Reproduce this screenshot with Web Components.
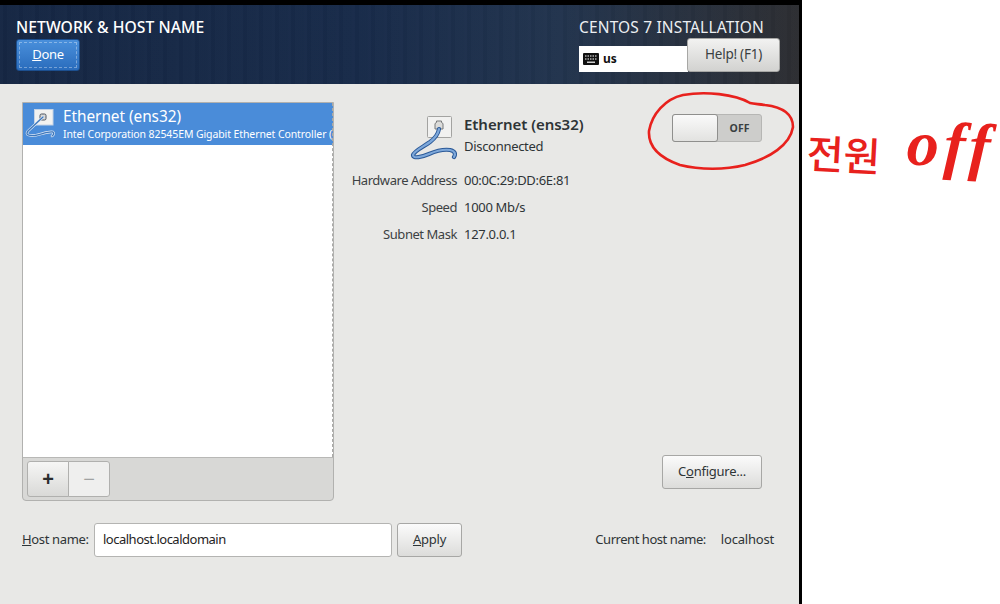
<!DOCTYPE html>
<html lang="en">
<head>
<meta charset="utf-8">
<title>Network & Host Name</title>
<style>
  html, body { margin: 0; padding: 0; background: #fff; }
  body { font-family: "Noto Sans", sans-serif; }
</style>
</head>
<body>
<install-window>
  <spoke-header slot="header" title-text="NETWORK &amp; HOST NAME" product="CENTOS 7 INSTALLATION"></spoke-header>
  <network-spoke slot="body"></network-spoke>
</install-window>

<script>
const FONT = '"Noto Sans", sans-serif';

class GtkButton extends HTMLElement {
  constructor() {
    super();
    this.shadowDOM = this.attachShadow({ mode: 'open' });
  }

  connectedCallback() {
    this.shadowDOM.innerHTML = `
    <style>
      :host {
        display: flex;
        align-items: center;
        justify-content: center;
        box-sizing: border-box;
        width: var(--w, 64px);
        height: var(--h, 34px);
        flex: none;
        padding-bottom: 2px;
        border: 1px solid #a7a7a5;
        border-radius: 3px;
        background: linear-gradient(#fbfbfb, #dcdcda);
        color: #2e3436;
        font: 13px/1 ${FONT};
        letter-spacing: -0.25px;
      }
      :host([kind="done"]) {
        background: linear-gradient(#4a90dc, #2a6cbc);
        border-color: #1c4f8f;
        color: #fff;
        outline: 1px dashed rgba(255,255,255,.35);
        outline-offset: -4px;
      }
      :host([kind="help"]) {
        padding-bottom: 0;
        background: linear-gradient(#f2f2f1, #d2d2d0);
        color: #3a3f41;
        font-size: 13.500px;
      }
    </style>
    <slot></slot>`;
  }
}

class EthIcon extends HTMLElement {
  constructor() {
    super();
    this.shadowDOM = this.attachShadow({ mode: 'open' });
  }

  connectedCallback() {
    this.shadowDOM.innerHTML = this.hasAttribute('small') ? this.smallIcon() : this.bigIcon();
  }

  base() {
    return `
    <style>
      :host { display: block; flex: none; width: var(--s, 48px); height: var(--s2, 46px); }
      svg { display: block; width: 100%; height: 100%; }
    </style>`;
  }

  bigIcon() {
    const cable = 'M30 15C29 21 25 25 21 28C14 33 5 37 4 41C4 45 13 43 20 40C27 37 34 35 41 36C46 37 47 40 45 43';
    return `${this.base()}
    <svg viewBox="0 0 48 46" fill="none">
      <rect x="18.500" y="2.500" width="24" height="21" rx="1" fill="#f1f1f0" stroke="#a3a3a1"/>
      <path d="M26 15V9.500L27.500 8.500V7H32.500V8.500L34 9.500V15Z" fill="#dcdcda" stroke="#77797a"/>
      <path d="${cable}" stroke="#2c5a98" stroke-width="4.200" stroke-linecap="round"/>
      <path d="${cable}" stroke="#7ea8da" stroke-width="2.200" stroke-linecap="round"/>
    </svg>`;
  }

  smallIcon() {
    const cable = 'M18 10L3 24C0 28 4 29 10 28.500C17 27 24 24 28 25C29.500 26 28.500 28 27 29';
    return `${this.base()}
    <svg viewBox="0 0 36 34" fill="none">
      <rect x="9.500" y="2.500" width="18.500" height="15.500" fill="#f2f2f0" stroke="#c4d3e6"/>
      <rect x="15" y="7" width="6" height="6" rx="1.500" fill="#d8d8d6" stroke="#4c5560"/>
      <path d="${cable}" stroke="#dfe9f6" stroke-width="2.600" stroke-linecap="round"/>
      <path d="${cable}" stroke="#3f78bb" stroke-width="1.300" stroke-linecap="round"/>
    </svg>`;
  }
}

class SpokeHeader extends HTMLElement {
  constructor() {
    super();
    this.shadowDOM = this.attachShadow({ mode: 'open' });
  }

  connectedCallback() {
    this.shadowDOM.innerHTML = `
    <style>
      :host {
        display: flex;
        justify-content: space-between;
        box-sizing: border-box;
        height: 79px;
        padding: 13px 19px 0 16px;
        color: #fff;
        background:
          repeating-linear-gradient(90deg, rgba(255,255,255,.012) 0 3px, rgba(0,0,0,.025) 3px 7px, rgba(255,255,255,.006) 7px 16px),
          linear-gradient(90deg, #162744 0%, #182b4a 45%, #22344e 70%, #2d2e32 100%);
      }
      h1 {
        margin: 0 0 2px;
        font: 500 15.700px/19px ${FONT};
        letter-spacing: 0.05px;
      }
      .right { width: 201px; }
      .product {
        font: 15.500px/19px ${FONT};
        letter-spacing: 0.15px;
        color: #eceff2;
        margin-bottom: 1px;
        white-space: nowrap;
      }
      .row { display: flex; align-items: flex-end; }
      .kbd {
        display: flex;
        align-items: center;
        gap: 4px;
        box-sizing: border-box;
        width: 109px;
        height: 26px;
        padding-left: 4px;
        margin-right: -1px;
        background: #fff;
        color: #111;
        font: 700 12px/1 ${FONT};
      }
      svg { display: block; }
      gtk-button { --w: 93px; --h: 34px; }
      .done { --w: 64px; --h: 32px; }
    </style>
    <div>
      <h1>${this.getAttribute('title-text').replace('&', '&amp;')}</h1>
      <gtk-button class="done" kind="done"><span><u>D</u>one</span></gtk-button>
    </div>
    <div class="right">
      <div class="product">${this.getAttribute('product')}</div>
      <div class="row">
        <div class="kbd">
          <svg width="16" height="12" viewBox="0 0 16 12">
            <rect width="16" height="12" rx="1" fill="#111"/>
            <path d="M2 3H14M2 6H14" stroke="#fff" stroke-dasharray="1.500 1"/>
            <path d="M4 9.200H12" stroke="#fff" stroke-width="1.200"/>
          </svg>
          <span>us</span>
        </div>
        <gtk-button kind="help">Help! (F1)</gtk-button>
      </div>
    </div>`;
  }
}

class DeviceList extends HTMLElement {
  constructor() {
    super();
    this.shadowDOM = this.attachShadow({ mode: 'open' });
  }

  connectedCallback() {
    this.shadowDOM.innerHTML = `
    <style>
      :host {
        display: flex;
        flex-direction: column;
        box-sizing: border-box;
        width: 312px;
        height: 399px;
        flex: none;
        border: 1px solid #b1b1af;
        border-radius: 0 0 4px 4px;
        background: #d8d8d6;
        overflow: hidden;
      }
      .list {
        flex: 1;
        background: #fff;
        border-bottom: 1px solid #b8b8b6;
        position: relative;
      }
      .list::after {
        content: "";
        position: absolute;
        top: 0; bottom: 0; right: 0;
        border-right: 1px dashed #a9a9a7;
      }
      .item {
        display: flex;
        height: 42px;
        box-sizing: border-box;
        padding: 4px 0 0 2px;
        background: #4a8cd9;
        color: #fff;
        overflow: hidden;
      }
      eth-icon { --s: 36px; --s2: 34px; margin-right: 2px; }
      .name { font: 15.400px/20px ${FONT}; letter-spacing: -0.05px; }
      .desc { font: 10.500px/14px ${FONT}; letter-spacing: -0.1px; white-space: nowrap; }
      .bar { display: flex; padding: 3px 0 3px 4px; height: 42px; box-sizing: border-box; }
      .tool {
        box-sizing: border-box;
        height: 36px;
        display: flex;
        align-items: center;
        justify-content: center;
        border: 1px solid #b0b0ae;
        font: 400 20px/1 "Liberation Sans", sans-serif;
      }
      .add {
        width: 42px;
        border-radius: 3px 0 0 3px;
        background: linear-gradient(#f6f6f5, #d9d9d7);
        color: #2a2d2e;
        font-weight: 700;
      }
      .remove {
        width: 42px;
        margin-left: -1px;
        border-radius: 0 3px 3px 0;
        background: #efefee;
        color: #a0a2a2;
      }
    </style>
    <div class="list">
      <div class="item">
        <eth-icon small></eth-icon>
        <div>
          <div class="name">Ethernet (ens32)</div>
          <div class="desc">Intel Corporation 82545EM Gigabit Ethernet Controller (</div>
        </div>
      </div>
    </div>
    <div class="bar">
      <div class="tool add">+</div>
      <div class="tool remove">&minus;</div>
    </div>`;
  }
}

class DeviceDetails extends HTMLElement {
  constructor() {
    super();
    this.shadowDOM = this.attachShadow({ mode: 'open' });
  }

  connectedCallback() {
    this.shadowDOM.innerHTML = `
    <style>
      :host {
        display: flex;
        flex: 1;
        flex-direction: column;
        color: #2e3436;
        font: 13px/1 ${FONT};
        letter-spacing: -0.3px;
        height: 387px;
      }
      .top { display: flex; justify-content: space-between; padding: 12px 37px 0 18px; }
      .info {
        display: grid;
        grid-template-columns: 105px auto;
        grid-template-rows: 48px 18px 18px 18px;
        column-gap: 7px;
        row-gap: 9px;
        align-items: center;
      }
      .k { text-align: right; justify-self: end; color: #3c4143; white-space: nowrap; letter-spacing: -0.45px; }
      .head { display: flex; grid-column: 1 / 3; align-self: start; height: 48px; }
      .head eth-icon { margin: 0 7px 0 57px; --s: 48px; --s2: 46px; }
      .title { font: 600 15px/20px ${FONT}; letter-spacing: -0.05px; margin: 0 0 6px; white-space: nowrap; }
      .switch {
        display: flex;
        box-sizing: border-box;
        width: 90px;
        height: 28px;
        border: 1px solid #b6b6b4;
        border-radius: 3px;
        background: #cdcdcb;
      }
      .knob {
        box-sizing: border-box;
        width: 46px;
        height: 28px;
        margin: -1px 0 0 -1px;
        border: 1px solid #8f8f8d;
        border-radius: 3px;
        background: linear-gradient(#fafafa, #e2e2e0);
      }
      .off { flex: 1; text-align: center; font: 700 10.500px/26px ${FONT}; letter-spacing: 0; color: #3a3f41; }
      .foot { margin-top: auto; display: flex; justify-content: flex-end; padding-right: 37px; }
      gtk-button { --w: 100px; --h: 34px; }
    </style>
    <div class="top">
      <div class="info">
        <div class="head">
          <eth-icon></eth-icon>
          <div>
            <div class="title">Ethernet (ens32)</div>
            <div>Disconnected</div>
          </div>
        </div>
        <div class="k">Hardware Address</div><div>00:0C:29:DD:6E:81</div>
        <div class="k">Speed</div><div>1000 Mb/s</div>
        <div class="k">Subnet Mask</div><div>127.0.0.1</div>
      </div>
      <div class="switch"><div class="knob"></div><div class="off">OFF</div></div>
    </div>
    <div class="foot"><gtk-button><span>C<u>o</u>nfigure...</span></gtk-button></div>`;
  }
}

class HostRow extends HTMLElement {
  constructor() {
    super();
    this.shadowDOM = this.attachShadow({ mode: 'open' });
  }

  connectedCallback() {
    this.shadowDOM.innerHTML = `
    <style>
      :host {
        display: flex;
        align-items: center;
        height: 34px;
        margin-top: 22px;
        padding-right: 25px;
        color: #2e3436;
        font: 13px/1 ${FONT};
        letter-spacing: -0.35px;
      }
      .label { width: 72px; flex: none; padding-bottom: 2px; }
      .entry {
        box-sizing: border-box;
        width: 298px;
        height: 34px;
        display: flex;
        align-items: center;
        padding: 0 0 2px 8px;
        margin-right: 5px;
        border: 1px solid #b4b4b2;
        border-radius: 3px;
        background: #fff;
        color: #1f2324;
        letter-spacing: -0.5px;
      }
      gtk-button { --w: 65px; --h: 34px; }
      .current { margin-left: auto; display: flex; gap: 15px; padding-bottom: 2px; letter-spacing: -0.45px; }
      .current .value { letter-spacing: -0.2px; }
    </style>
    <span class="label"><u>H</u>ost name:</span>
    <div class="entry">localhost.localdomain</div>
    <gtk-button><span><u>A</u>pply</span></gtk-button>
    <div class="current"><span>Current host name:</span><span class="value">localhost</span></div>`;
  }
}

class NetworkSpoke extends HTMLElement {
  constructor() {
    super();
    this.shadowDOM = this.attachShadow({ mode: 'open' });
  }

  connectedCallback() {
    this.shadowDOM.innerHTML = `
    <style>
      :host {
        display: block;
        box-sizing: border-box;
        height: 520px;
        padding: 18px 0 0 22px;
        background: #e8e8e6;
      }
      .columns { display: flex; }
    </style>
    <div class="columns">
      <device-list></device-list>
      <device-details></device-details>
    </div>
    <host-row></host-row>`;
  }
}

class InstallWindow extends HTMLElement {
  constructor() {
    super();
    this.shadowDOM = this.attachShadow({ mode: 'open' });
  }

  connectedCallback() {
    this.shadowDOM.innerHTML = `
    <style>
      :host {
        display: block;
        position: relative;
        width: 1000px;
        height: 604px;
        overflow: hidden;
        background: #fff;
      }
      .screen {
        width: 799px;
        height: 599px;
        border-top: 5px solid #000;
        border-right: 3px solid #000;
      }
      svg { position: absolute; left: 0; top: 0; pointer-events: none; }
      .note {
        position: absolute;
        left: 807px;
        top: 116px;
        color: #e8211d;
        white-space: nowrap;
        font: 500 40px/62px "Noto Sans CJK KR", sans-serif;
        transform: rotate(3deg);
        transform-origin: 0 50%;
      }
      .note span {
        font: italic 700 64px/62px "Liberation Serif", serif;
        letter-spacing: 5px;
        margin-left: 26px;
        position: relative;
        top: -9px;
      }
    </style>
    <div class="screen">
      <slot name="header"></slot>
      <slot name="body"></slot>
    </div>
    <svg width="1000" height="604" fill="none">
      <path d="M750 103C735 94 705 91 683 95C665 99 652 114 649 131C648 147 660 158 680 165C700 170 725 170 745 165C770 158 790 145 793 127C793 113 782 107 765 105C758 104 754 104 750 103Z" stroke="#e8211d" stroke-width="2.600" stroke-linecap="round"/>
    </svg>
    <div class="note">전원<span>off</span></div>`;
  }
}

customElements.define('gtk-button', GtkButton);
customElements.define('eth-icon', EthIcon);
customElements.define('spoke-header', SpokeHeader);
customElements.define('device-list', DeviceList);
customElements.define('device-details', DeviceDetails);
customElements.define('host-row', HostRow);
customElements.define('network-spoke', NetworkSpoke);
customElements.define('install-window', InstallWindow);
</script>
</body>
</html>
